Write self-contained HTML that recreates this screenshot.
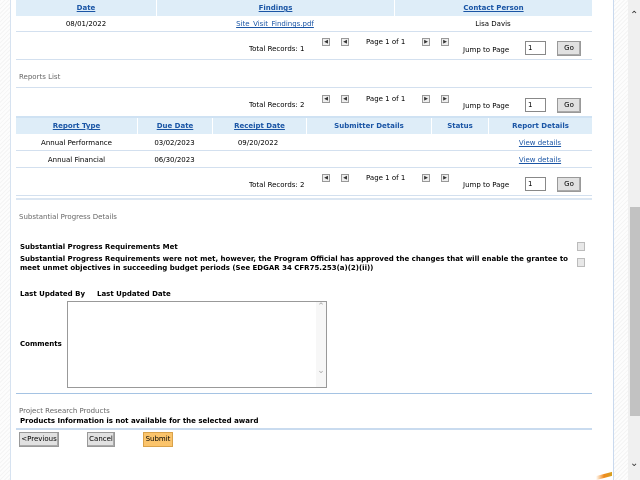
<!DOCTYPE html>
<html><head><meta charset="utf-8"><style>
*{margin:0;padding:0;box-sizing:border-box}
body{width:640px;height:480px;overflow:hidden;position:relative;font-family:"DejaVu Sans","Liberation Sans",sans-serif;font-size:7px;color:#000;
background:repeating-linear-gradient(135deg,#f4f4f4 0 1px,#fdfdfd 1px 3px)}
#panel{position:absolute;left:10px;top:0;width:604px;height:480px;background:#fff;border-left:1px solid #d6e2f0;border-right:1px solid #c9d9ee}
#sb{position:absolute;left:628px;top:0;width:12px;height:480px;background:#f0f0f0}
#thumb{position:absolute;left:630px;top:207px;width:10px;height:209px;background:#c2c2c2}
.a{position:absolute;white-space:nowrap}
.hdr{position:absolute;background:#deedf8;height:16px}
.hd{position:absolute;top:0;height:16px;line-height:16px;text-align:center;font-weight:bold;color:#1a55a5;text-decoration:underline;border-left:1px solid #fff}
.hd.n{text-decoration:none}
.ln{position:absolute;left:16px;width:576px;height:1px;background:#d3e0ef}
.lnb{position:absolute;left:16px;width:576px;height:2px;background:#a9c6e6}
.ic{position:absolute;width:8px;height:8px;border:1px solid #999;background:#eee;font-size:5px;line-height:6px;text-align:center;color:#333}
.inp{position:absolute;width:21px;height:14px;border:1px solid #888;background:#fff;padding-left:2px;line-height:12px}
.btn{position:absolute;height:15px;border:1px solid #999;background:#e1e1e1;text-align:center;line-height:13px;box-shadow:inset -1px -1px 0 #aaa}
.c{position:absolute;text-align:center}
.lk{color:#1a55a5;text-decoration:underline}
.b{font-weight:bold}
.g{color:#666}
.cb{position:absolute;width:8px;height:9px;border:1px solid #bbb;background:#e8e8e8}
</style></head><body>
<div id="panel"></div>
<div id="sb"></div><div id="thumb"></div>
<div class="a" style="left:630px;top:10px;font-size:10px;color:#333">&#8963;</div>
<div class="a" style="left:630px;top:458px;font-size:10px;color:#333">&#8964;</div>

<div class="hdr" style="left:16px;top:0;width:576px">
<div class="hd" style="left:0;width:140px;border:none">Date</div>
<div class="hd" style="left:140px;width:238px">Findings</div>
<div class="hd" style="left:378px;width:198px">Contact Person</div>
</div>
<div class="c" style="left:16px;width:140px;top:20px">08/01/2022</div>
<div class="c lk" style="left:156px;width:238px;top:20px">Site_Visit_Findings.pdf</div>
<div class="c" style="left:394px;width:198px;top:20px">Lisa Davis</div>
<div class="ln" style="top:31px"></div>
<div class="a" style="left:249px;top:45px">Total Records: 1</div>
<div class="ic" style="left:322px;top:38px">&#9664;</div><div class="ic" style="left:341px;top:38px">&#9664;</div>
<div class="a" style="left:366px;top:38px">Page 1 of 1</div>
<div class="ic" style="left:422px;top:38px">&#9654;</div><div class="ic" style="left:441px;top:38px">&#9654;</div>
<div class="a" style="left:463px;top:46px">Jump to Page</div>
<div class="inp" style="left:525px;top:41px">1</div>
<div class="btn" style="left:557px;top:41px;width:24px">Go</div>
<div class="ln" style="top:59px"></div>

<div class="a g" style="left:19px;top:73px">Reports List</div>
<div class="ln" style="top:87px"></div>
<div class="a" style="left:249px;top:101px">Total Records: 2</div>
<div class="ic" style="left:322px;top:95px">&#9664;</div><div class="ic" style="left:341px;top:95px">&#9664;</div>
<div class="a" style="left:366px;top:95px">Page 1 of 1</div>
<div class="ic" style="left:422px;top:95px">&#9654;</div><div class="ic" style="left:441px;top:95px">&#9654;</div>
<div class="a" style="left:463px;top:102px">Jump to Page</div>
<div class="inp" style="left:525px;top:98px">1</div>
<div class="btn" style="left:557px;top:98px;width:24px">Go</div>

<div class="hdr" style="left:16px;top:116px;width:576px;height:18px;border-top:2px solid #cfe2f3">
<div class="hd" style="left:0;width:121px;border:none">Report Type</div>
<div class="hd" style="left:121px;width:75px">Due Date</div>
<div class="hd" style="left:196px;width:94px">Receipt Date</div>
<div class="hd n" style="left:290px;width:125px">Submitter Details</div>
<div class="hd n" style="left:415px;width:57px">Status</div>
<div class="hd n" style="left:472px;width:104px">Report Details</div>
</div>
<div class="c" style="left:16px;width:121px;top:139px">Annual Performance</div>
<div class="c" style="left:137px;width:75px;top:139px">03/02/2023</div>
<div class="c" style="left:211px;width:94px;top:139px">09/20/2022</div>
<div class="c lk" style="left:488px;width:104px;top:139px">View details</div>
<div class="ln" style="top:150px"></div>
<div class="c" style="left:16px;width:121px;top:156px">Annual Financial</div>
<div class="c" style="left:137px;width:75px;top:156px">06/30/2023</div>
<div class="c lk" style="left:488px;width:104px;top:156px">View details</div>
<div class="ln" style="top:167px"></div>
<div class="a" style="left:249px;top:181px">Total Records: 2</div>
<div class="ic" style="left:322px;top:174px">&#9664;</div><div class="ic" style="left:341px;top:174px">&#9664;</div>
<div class="a" style="left:366px;top:174px">Page 1 of 1</div>
<div class="ic" style="left:422px;top:174px">&#9654;</div><div class="ic" style="left:441px;top:174px">&#9654;</div>
<div class="a" style="left:463px;top:181px">Jump to Page</div>
<div class="inp" style="left:525px;top:177px">1</div>
<div class="btn" style="left:557px;top:177px;width:24px">Go</div>
<div class="ln" style="top:195px"></div>
<div class="ln" style="top:198px;height:2px;background:#dbe6f2"></div>

<div class="a g" style="left:19px;top:213px">Substantial Progress Details</div>
<div class="a b" style="left:20px;top:243px">Substantial Progress Requirements Met</div>
<div class="a b" style="left:20px;top:255px;line-height:9px">Substantial Progress Requirements were not met, however, the Program Official has approved the changes that will enable the grantee to<br>meet unmet objectives in succeeding budget periods (See EDGAR 34 CFR75.253(a)(2)(ii))</div>
<div class="cb" style="left:577px;top:242px"></div>
<div class="cb" style="left:577px;top:258px"></div>

<div class="a b" style="left:20px;top:290px">Last Updated By</div>
<div class="a b" style="left:97px;top:290px">Last Updated Date</div>
<div class="a b" style="left:20px;top:340px">Comments</div>
<div class="a" style="left:67px;top:301px;width:260px;height:87px;border:1px solid #999;background:#fff"></div>
<div class="a" style="left:316px;top:302px;width:10px;height:85px;background:#f7f7f7;color:#aaa;font-size:9px;text-align:center">&#8963;</div>
<div class="a" style="left:316px;top:366px;color:#aaa;font-size:9px;width:10px;text-align:center">&#8964;</div>
<div class="lnb" style="top:393px;height:1px;background:#a5c3e3"></div>

<div class="a g" style="left:19px;top:407px">Project Research Products</div>
<div class="a b" style="left:20px;top:417px">Products Information is not available for the selected award</div>
<div class="lnb" style="top:428px;height:2px;background:#c9dbef"></div>
<div class="btn" style="left:19px;top:432px;width:40px">&lt;Previous</div>
<div class="btn" style="left:87px;top:432px;width:28px">Cancel</div>
<div class="btn" style="left:143px;top:432px;width:30px;background:#fbc46b;border-color:#d9a24a;box-shadow:none">Submit</div>
<div class="a" style="left:596px;top:474px;width:16px;height:4px;background:linear-gradient(90deg,#fff,#f08a1c,#d4a020);transform:skewY(-15deg)"></div>
</body></html>
